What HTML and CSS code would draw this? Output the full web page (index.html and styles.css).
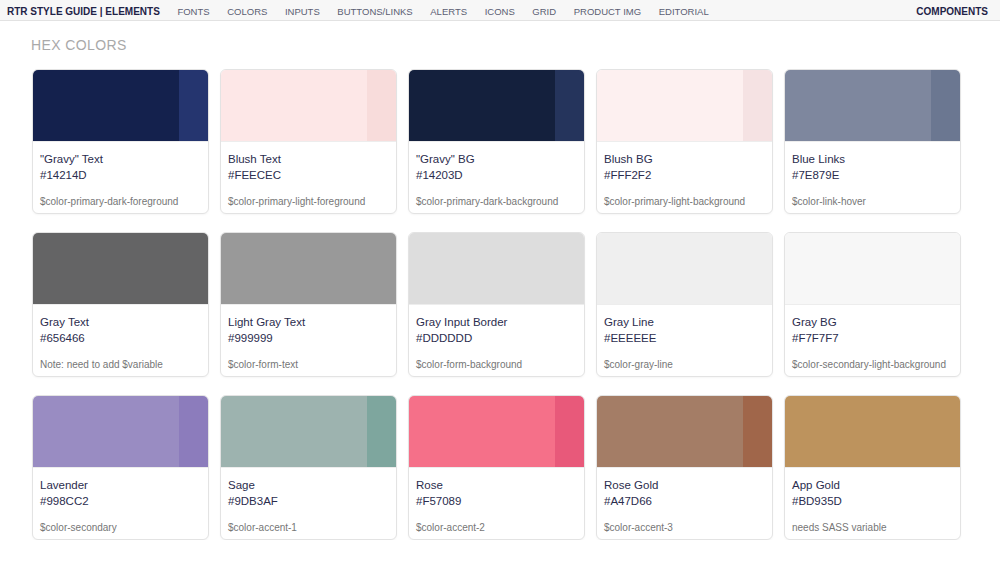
FILE: index.html
```html
<!DOCTYPE html>
<html lang="en">
<head>
<meta charset="utf-8">
<title>RTR Style Guide | Elements</title>
<link rel="stylesheet" href="styles.css">
</head>
<body>
<nav class="topnav">
  <div class="nav-left">
    <span class="brand">RTR STYLE GUIDE | ELEMENTS</span>
    <a class="nav-link">FONTS</a>
    <a class="nav-link">COLORS</a>
    <a class="nav-link">INPUTS</a>
    <a class="nav-link">BUTTONS/LINKS</a>
    <a class="nav-link">ALERTS</a>
    <a class="nav-link">ICONS</a>
    <a class="nav-link">GRID</a>
    <a class="nav-link">PRODUCT IMG</a>
    <a class="nav-link">EDITORIAL</a>
  </div>
  <a class="nav-right">COMPONENTS</a>
</nav>

<main class="content">
  <h2 class="section-title">HEX COLORS</h2>
  <div class="swatch-grid">
    <div class="card">
      <div class="swatch"><div class="swatch-main" style="background:#14214D"></div><div class="swatch-alt" style="background:#25356F"></div></div>
      <div class="card-body"><div class="name">"Gravy" Text</div><div class="hex">#14214D</div><div class="var">$color-primary-dark-foreground</div></div>
    </div>
    <div class="card">
      <div class="swatch"><div class="swatch-main" style="background:#FDE7E7"></div><div class="swatch-alt" style="background:#F8DCDB"></div></div>
      <div class="card-body"><div class="name">Blush Text</div><div class="hex">#FEECEC</div><div class="var">$color-primary-light-foreground</div></div>
    </div>
    <div class="card">
      <div class="swatch"><div class="swatch-main" style="background:#14203D"></div><div class="swatch-alt" style="background:#25345C"></div></div>
      <div class="card-body"><div class="name">"Gravy" BG</div><div class="hex">#14203D</div><div class="var">$color-primary-dark-background</div></div>
    </div>
    <div class="card">
      <div class="swatch"><div class="swatch-main" style="background:#FDF0F0"></div><div class="swatch-alt" style="background:#F5E2E3"></div></div>
      <div class="card-body"><div class="name">Blush BG</div><div class="hex">#FFF2F2</div><div class="var">$color-primary-light-background</div></div>
    </div>
    <div class="card">
      <div class="swatch"><div class="swatch-main" style="background:#7E879E"></div><div class="swatch-alt" style="background:#6B7791"></div></div>
      <div class="card-body"><div class="name">Blue Links</div><div class="hex">#7E879E</div><div class="var">$color-link-hover</div></div>
    </div>

    <div class="card">
      <div class="swatch"><div class="swatch-main" style="background:#646465"></div></div>
      <div class="card-body"><div class="name">Gray Text</div><div class="hex">#656466</div><div class="var">Note: need to add $variable</div></div>
    </div>
    <div class="card">
      <div class="swatch"><div class="swatch-main" style="background:#999999"></div></div>
      <div class="card-body"><div class="name">Light Gray Text</div><div class="hex">#999999</div><div class="var">$color-form-text</div></div>
    </div>
    <div class="card">
      <div class="swatch"><div class="swatch-main" style="background:#DDDDDD"></div></div>
      <div class="card-body"><div class="name">Gray Input Border</div><div class="hex">#DDDDDD</div><div class="var">$color-form-background</div></div>
    </div>
    <div class="card">
      <div class="swatch"><div class="swatch-main" style="background:#EFEFEF"></div></div>
      <div class="card-body"><div class="name">Gray Line</div><div class="hex">#EEEEEE</div><div class="var">$color-gray-line</div></div>
    </div>
    <div class="card">
      <div class="swatch"><div class="swatch-main" style="background:#F7F7F7"></div></div>
      <div class="card-body"><div class="name">Gray BG</div><div class="hex">#F7F7F7</div><div class="var">$color-secondary-light-background</div></div>
    </div>

    <div class="card">
      <div class="swatch"><div class="swatch-main" style="background:#998CC2"></div><div class="swatch-alt" style="background:#8C7CBC"></div></div>
      <div class="card-body"><div class="name">Lavender</div><div class="hex">#998CC2</div><div class="var">$color-secondary</div></div>
    </div>
    <div class="card">
      <div class="swatch"><div class="swatch-main" style="background:#9DB3AF"></div><div class="swatch-alt" style="background:#7EA69E"></div></div>
      <div class="card-body"><div class="name">Sage</div><div class="hex">#9DB3AF</div><div class="var">$color-accent-1</div></div>
    </div>
    <div class="card">
      <div class="swatch"><div class="swatch-main" style="background:#F57089"></div><div class="swatch-alt" style="background:#E8597A"></div></div>
      <div class="card-body"><div class="name">Rose</div><div class="hex">#F57089</div><div class="var">$color-accent-2</div></div>
    </div>
    <div class="card">
      <div class="swatch"><div class="swatch-main" style="background:#A47D66"></div><div class="swatch-alt" style="background:#A0664A"></div></div>
      <div class="card-body"><div class="name">Rose Gold</div><div class="hex">#A47D66</div><div class="var">$color-accent-3</div></div>
    </div>
    <div class="card">
      <div class="swatch"><div class="swatch-main" style="background:#BD935D"></div></div>
      <div class="card-body"><div class="name">App Gold</div><div class="hex">#BD935D</div><div class="var">needs SASS variable</div></div>
    </div>
  </div>
</main>
</body>
</html>
```

FILE: styles.css
```css
* { box-sizing: border-box; }

body {
  margin: 0;
  background: #ffffff;
  font-family: "Liberation Sans", Arial, Helvetica, sans-serif;
  color: #2b2d4e;
}

.topnav {
  display: flex;
  align-items: center;
  justify-content: space-between;
  height: 21px;
  padding: 2px 12px 0 7px;
  background: #f7f7f7;
  border-bottom: 1px solid #e2e2e2;
}

.nav-left {
  display: flex;
  align-items: center;
  gap: 17.6px;
}

.brand {
  font-size: 10px;
  font-weight: bold;
  color: #1f2347;
  white-space: nowrap;
}

.nav-link {
  font-size: 9.5px;
  color: #5b5e73;
  white-space: nowrap;
  text-decoration: none;
}

.nav-right {
  font-size: 10px;
  font-weight: bold;
  color: #1f2347;
  text-decoration: none;
}

.content {
  padding: 0 0 0 32px;
}

.section-title {
  margin: 14px 0 14px -1px;
  font-size: 14px;
  line-height: 20px;
  font-weight: normal;
  letter-spacing: 0.4px;
  color: #a9a9a9;
}

.swatch-grid {
  display: grid;
  grid-template-columns: repeat(5, 177px);
  column-gap: 11px;
  row-gap: 18px;
}

.card {
  border: 1px solid #e3e3e3;
  border-radius: 6px;
  overflow: hidden;
  background: #ffffff;
  box-shadow: 0 1px 2px rgba(0, 0, 0, 0.04);
}

.swatch {
  display: flex;
  height: 72px;
  border-bottom: 1px solid rgba(0, 0, 0, 0.07);
}

.swatch-main {
  flex: 1;
}

.swatch-alt {
  width: 29px;
}

.card-body {
  padding: 9px 7px 4px 7px;
}

.name,
.hex {
  font-size: 11.5px;
  line-height: 16px;
  color: #2b2d4e;
}

.var {
  margin-top: 12px;
  font-size: 10px;
  line-height: 14px;
  color: #767676;
  white-space: nowrap;
}
```
